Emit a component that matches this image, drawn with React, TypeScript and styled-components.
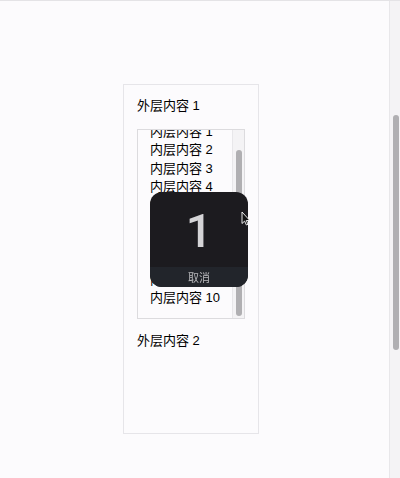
import { useEffect, useRef } from "react";
import styled, { createGlobalStyle } from "styled-components";

const GlobalStyle = createGlobalStyle`
  html, body {
    margin: 0;
    padding: 0;
    height: 100%;
    overflow: hidden;
    background: #fcfbfd;
    font-family: "Liberation Sans", "Noto Sans CJK SC", sans-serif;
  }
`;

const innerItems = Array.from({ length: 10 }, (_, i) => `内层内容 ${i + 1}`);

export default function App() {
  const innerRef = useRef<HTMLDivElement>(null);

  useEffect(() => {
    if (innerRef.current) innerRef.current.scrollTop = 9999;
  }, []);

  return (
    <>
      <GlobalStyle />
      <Shell>
        <Main>
          <OuterBox>
            <OuterText>外层内容 1</OuterText>
            <InnerBox>
              <InnerViewport ref={innerRef}>
                <InnerList>
                  {innerItems.map((item) => (
                    <InnerItem key={item}>{item}</InnerItem>
                  ))}
                </InnerList>
              </InnerViewport>
              <ScrollTrack $width={12}>
                <ScrollThumb $top={20} $length={166} />
              </ScrollTrack>
            </InnerBox>
            <OuterText>外层内容 2</OuterText>
          </OuterBox>
        </Main>
        <ScrollTrack $width={11}>
          <ScrollThumb $top={114} $length={235} />
        </ScrollTrack>
      </Shell>

      <Toast>
        <Count>1</Count>
        <CancelBar>取消</CancelBar>
      </Toast>

      <Cursor width="10" height="15" viewBox="0 0 10 15">
        <path
          d="M1 1 L1 12.5 L3.6 10.1 L5.4 14 L7 13.3 L5.3 9.5 L8.8 9.5 Z"
          fill="#111"
          stroke="#fff"
          strokeWidth="0.9"
          strokeLinejoin="round"
        />
      </Cursor>
    </>
  );
}

const Shell = styled.div`
  height: 100vh;
  box-sizing: border-box;
  border-top: 1px solid #e4e3e6;
  display: flex;
`;

const Main = styled.div`
  flex: 1;
  padding: 83px 0 0 123px;
`;

const ScrollTrack = styled.div<{ $width: number }>`
  width: ${(p) => p.$width}px;
  flex-shrink: 0;
  box-sizing: border-box;
  background: #f4f3f5;
  border-left: 1px solid #e8e7ea;
  display: flex;
  justify-content: center;
`;

const ScrollThumb = styled.div<{ $top: number; $length: number }>`
  width: 6px;
  height: ${(p) => p.$length}px;
  margin-top: ${(p) => p.$top}px;
  margin-left: 1px;
  border-radius: 3px;
  background: #b0afb2;
`;

const OuterBox = styled.div`
  width: 136px;
  height: 350px;
  box-sizing: border-box;
  border: 1px solid #e6e5e9;
  padding: 12px 13px;
  display: flex;
  flex-direction: column;
  gap: 13px;
`;

const OuterText = styled.div`
  font-size: 13px;
  line-height: 18.5px;
  color: #000;
`;

const InnerBox = styled.div`
  height: 190px;
  box-sizing: border-box;
  border: 1px solid #dcdbde;
  display: flex;
`;

const InnerViewport = styled.div`
  flex: 1;
  overflow: hidden;
`;

const InnerList = styled.div`
  padding: 12px 12px 10px;
`;

const InnerItem = styled.div`
  font-size: 13px;
  line-height: 18.5px;
  color: #000;
  white-space: nowrap;
`;

const Toast = styled.div`
  position: fixed;
  left: 150px;
  top: 192px;
  width: 98px;
  height: 95px;
  border-radius: 12px;
  overflow: hidden;
  background: #1c1b1f;
  display: flex;
  flex-direction: column;
`;

const Count = styled.div`
  flex: 1;
  display: flex;
  align-items: center;
  justify-content: center;
  padding-top: 2px;
  font-family: "Roboto", "Liberation Sans", sans-serif;
  font-weight: 500;
  font-size: 47px;
  color: #d4d4d6;
`;

const CancelBar = styled.div`
  height: 20px;
  display: flex;
  align-items: center;
  justify-content: center;
  background: #22252b;
  font-family: "Noto Sans CJK SC", sans-serif;
  font-size: 11px;
  color: #b9b9bc;
`;

const Cursor = styled.svg`
  position: fixed;
  left: 241px;
  top: 211px;
`;
